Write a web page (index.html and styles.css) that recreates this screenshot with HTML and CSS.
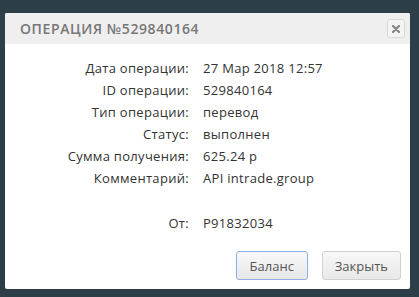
FILE: index.html
```html
<!DOCTYPE html>
<html lang="ru">
<head>
  <meta charset="UTF-8">
  <title>Операция</title>
  <link rel="stylesheet" href="styles.css">
</head>
<body>
  <div class="dialog">
    <div class="dialog-header">
      <span class="dialog-title">Операция №529840164</span>
      <button class="close-btn" title="Закрыть">
        <svg width="8" height="8" viewBox="0 0 8 8"><path d="M1 1L7 7M7 1L1 7" stroke="#888" stroke-width="2.4" stroke-linecap="round"/></svg>
      </button>
    </div>
    <div class="dialog-body">
      <table class="info-table">
        <tr><td class="label">Дата операции:</td><td>27 Мар 2018 12:57</td></tr>
        <tr><td class="label">ID операции:</td><td>529840164</td></tr>
        <tr><td class="label">Тип операции:</td><td>перевод</td></tr>
        <tr><td class="label">Статус:</td><td>выполнен</td></tr>
        <tr><td class="label">Сумма получения:</td><td>625.24 р</td></tr>
        <tr><td class="label">Комментарий:</td><td>API intrade.group</td></tr>
        <tr class="spacer"><td colspan="2"></td></tr>
        <tr><td class="label">От:</td><td>P91832034</td></tr>
      </table>
    </div>
    <div class="dialog-footer">
      <button class="btn btn-focus">Баланс</button>
      <button class="btn">Закрыть</button>
    </div>
  </div>
</body>
</html>
```

FILE: styles.css
```css
body {
  margin: 0;
  background-color: #2e3e48;
  font-family: "Open Sans", sans-serif;
  height: 297px;
  overflow: hidden;
}
.dialog {
  margin: 13px 0 0 5px;
  width: 405px;
  height: 276px;
  background: #fff;
  border-radius: 2px;
  display: flex;
  flex-direction: column;
}
.dialog-header {
  height: 31px;
  background: #efefef;
  display: flex;
  align-items: center;
  justify-content: space-between;
  padding: 0 5px 0 15px;
  border-radius: 2px 2px 0 0;
}
.dialog-title {
  text-transform: uppercase;
  color: #777;
  font-weight: 600;
  font-size: 14px;
  letter-spacing: 0.6px;
}
.close-btn {
  width: 18px;
  height: 19px;
  padding: 0;
  border: 1px solid #d8d8d8;
  border-radius: 3px;
  background: #f4f4f4;
  display: flex;
  align-items: center;
  justify-content: center;
}
.dialog-body {
  flex: 1;
  padding-top: 13px;
}
.info-table {
  border-collapse: collapse;
  font-size: 13px;
  letter-spacing: 0.3px;
  color: #333;
}
.info-table td {
  padding: 0 0 0 14px;
  height: 22px;
}
.info-table td.label {
  width: 184px;
  text-align: right;
  padding: 0;
}
.info-table tr.spacer td {
  height: 23px;
}
.dialog-footer {
  display: flex;
  justify-content: flex-end;
  gap: 14px;
  padding: 0 9px 9px 0;
}
.btn {
  height: 29px;
  padding: 0 12px;
  min-width: 72px;
  font-family: "Open Sans", sans-serif;
  font-size: 13px;
  color: #555;
  background: linear-gradient(#f8f8f8, #e8e8e8);
  border: 1px solid #d0d0d0;
  border-radius: 3px;
}
.btn-focus {
  border-color: #8fb0e0;
}
```
